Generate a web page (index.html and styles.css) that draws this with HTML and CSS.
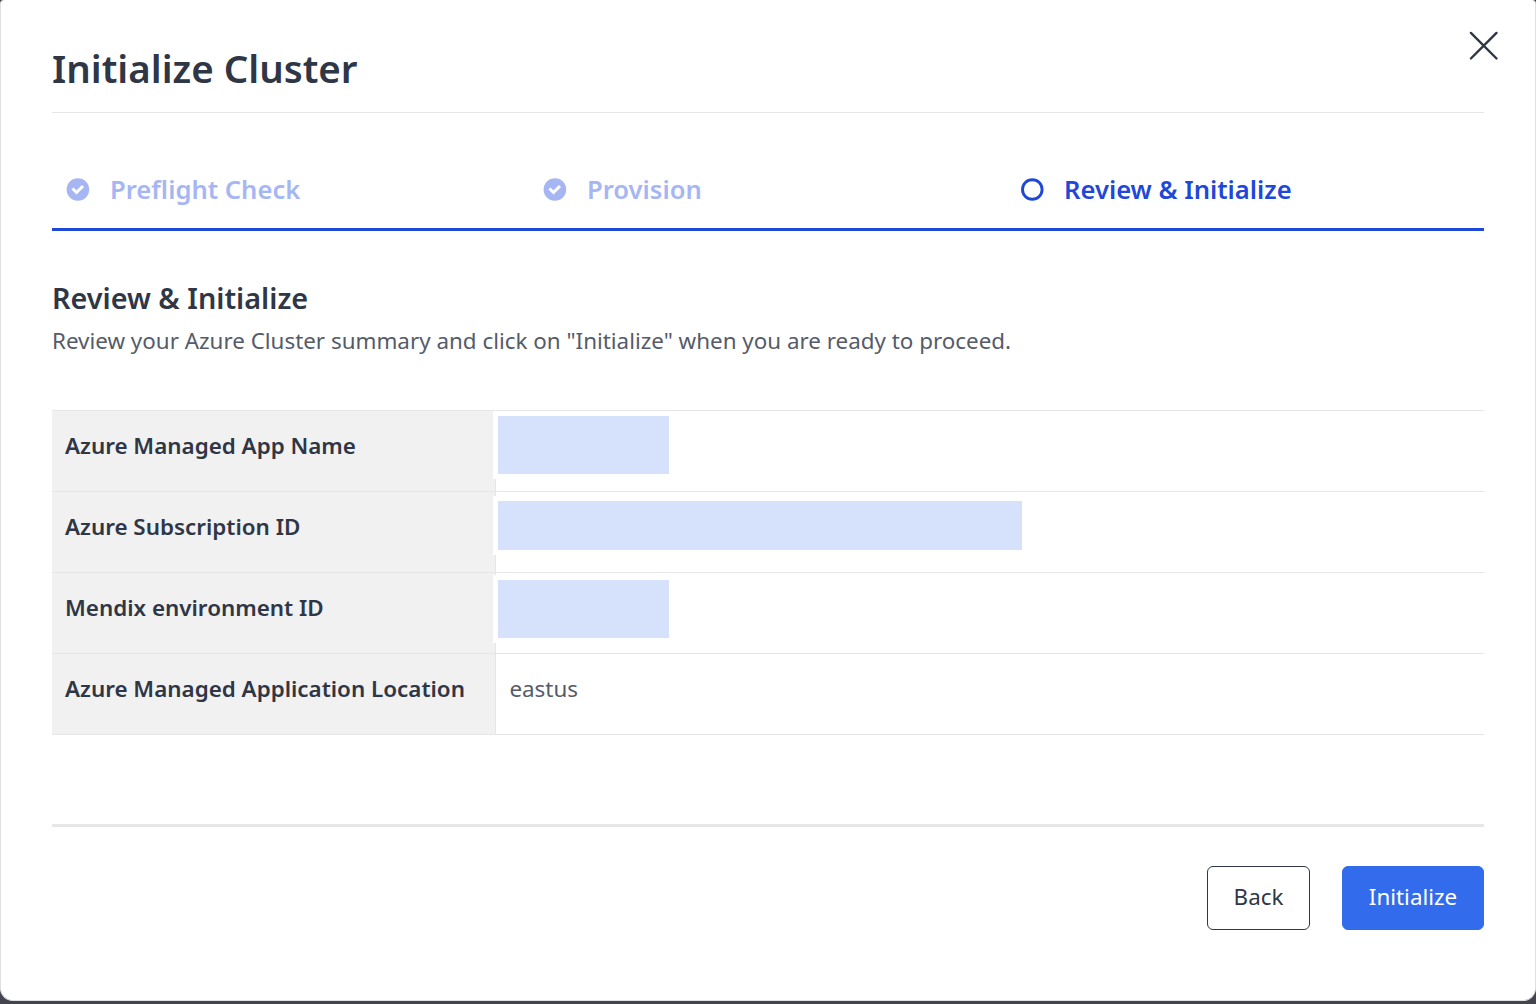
FILE: index.html
```html
<!DOCTYPE html>
<html lang="en">
<head>
<meta charset="utf-8">
<title>Initialize Cluster</title>
<link rel="stylesheet" href="styles.css">
</head>
<body>
<main class="dialog">
  <header class="header">
    <h1 class="title"><span>Initialize Cluster</span></h1>
    <button class="close" aria-label="Close"><svg width="30" height="30" viewBox="0 0 30 30"><path d="M1.9 1.9 27.5 27.5M27.5 1.9 1.9 27.5" stroke="#2f3646" stroke-width="2.4" stroke-linecap="round" fill="none"/></svg></button>
  </header>
  <nav class="steps">
    <div class="step done"><svg class="icon" viewBox="0 0 23 23"><circle cx="11.9" cy="11.5" r="11.3" fill="currentColor"/><path d="m6.5 10.5 4 4L17 8" fill="none" stroke="#fff" stroke-width="3"/></svg><span>Preflight Check</span></div>
    <div class="step done"><svg class="icon" viewBox="0 0 23 23"><circle cx="11.9" cy="11.5" r="11.3" fill="currentColor"/><path d="m6.5 10.5 4 4L17 8" fill="none" stroke="#fff" stroke-width="3"/></svg><span>Provision</span></div>
    <div class="step"><svg class="icon" viewBox="0 0 23 23"><circle cx="12.3" cy="11.5" r="9.8" fill="none" stroke="currentColor" stroke-width="2.9"/></svg><span>Review &amp; Initialize</span></div>
  </nav>
  <section class="intro">
    <h2 class="subtitle"><span>Review &amp; Initialize</span></h2>
    <p class="description"><span>Review your Azure Cluster summary and click on "Initialize" when you are ready to proceed.</span></p>
  </section>
  <dl class="summary">
    <div class="row"><dt><span>Azure Managed App Name</span></dt><dd class="masked first"><i class="mask"></i></dd></div>
    <div class="row"><dt><span>Azure Subscription ID</span></dt><dd class="masked second"><i class="mask"></i></dd></div>
    <div class="row"><dt><span>Mendix environment ID</span></dt><dd class="masked third"><i class="mask"></i></dd></div>
    <div class="row"><dt><span>Azure Managed Application Location</span></dt><dd><span>eastus</span></dd></div>
  </dl>
  <footer class="footer">
    <button class="button back">Back</button>
    <button class="button primary">Initialize</button>
  </footer>
</main>
</body>
</html>
```
FILE: styles.css
```css
* { box-sizing: border-box; }
body { margin: 0; height: 1004px; background: #43444f; overflow: hidden; font-family: "Noto Sans", sans-serif; color: #2f3646; }
.dialog { height: 1001px; padding: 0 51px; border: 1px solid #e0e0e2; border-top: 0; border-radius: 4px 4px 13px 13px; background: #fff; }
.header { height: 113px; display: flex; justify-content: space-between; border-bottom: 1px solid #e6e6e6; }
.title { margin: 41px 0 0; font-size: 38.5px; line-height: 54px; font-weight: 600; }
.close { margin: 31px -15px 0 0; padding: 0; width: 30px; height: 30px; border: 0; background: none; }
.close svg { display: block; }
.steps { display: grid; grid-template-columns: 477px 477px 1fr; height: 118px; padding-top: 58px; border-bottom: 3px solid #1f48d8; }
.step { display: flex; align-items: center; height: 36px; padding-left: 14px; gap: 21px; font-size: 25.6px; line-height: 36px; font-weight: 600; color: #1f48d8; }
.step span { padding-top: 2px; }
.done { color: #a6b6f2; }
.icon { width: 23px; height: 23px; overflow: visible; }
.intro { height: 179px; padding-top: 46px; }
.subtitle { margin: 0; font-size: 28.8px; line-height: 42px; font-weight: 600; }
.description { margin: 6px 0 0; font-size: 22.4px; line-height: 32px; color: #555b69; }
.summary { margin: 0; border-top: 1px solid #e6e6e6; }
.row { display: flex; height: 81px; border-bottom: 1px solid #e6e6e6; font-size: 22.4px; line-height: 32px; }
.row dt { width: 444px; padding: 19px 13px; background: #f1f1f1; border-right: 1px solid #e6e6e6; font-weight: 600; white-space: nowrap; }
.row dd { margin: 0; flex: 1; padding: 19px 13.4px; color: #555b69; }
.row .masked { padding: 5px 2px; }
.mask { display: block; width: 171px; height: 58px; background: #d6e1fc; box-shadow: 0 0 0 5px #fff; }
.second .mask { width: 524px; height: 49px; margin-top: 4px; }
.third .mask { margin-top: 2px; }
.footer { margin-top: 89px; padding-top: 39px; border-top: 3px solid #e6e6e6; display: flex; justify-content: flex-end; gap: 32px; }
.button { height: 64px; padding: 0 0 2px; border: 1px solid #2f3646; border-radius: 6px; background: #fff; color: #2f3646; font: 22.4px/32px "Noto Sans", sans-serif; }
.back { width: 103px; }
.primary { width: 142px; color: #fff; background: #326cec; border-color: #326cec; }
```
